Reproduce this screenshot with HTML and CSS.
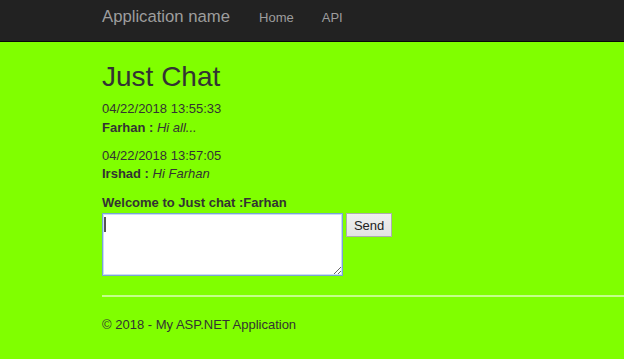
FILE: index.html
```html
<!DOCTYPE html>
<html lang="en">
<head>
    <meta charset="UTF-8">
    <meta name="viewport" content="width=device-width, initial-scale=1.0">
    <title>Just Chat - My ASP.NET Application</title>
    <link rel="stylesheet" href="styles.css">
</head>
<body>
    <!-- Top navigation -->
    <div class="navbar">
        <a class="navbar-brand" href="#">Application name</a>
        <ul class="nav">
            <li><a href="#">Home</a></li>
            <li><a href="#">API</a></li>
        </ul>
    </div>

    <div class="body-content">
        <h2>Just Chat</h2>

        <div class="messages">
            <p>
                04/22/2018 13:55:33<br>
                <strong>Farhan :</strong> <em>Hi all...</em>
            </p>
            <p>
                04/22/2018 13:57:05<br>
                <strong>Irshad :</strong> <em>Hi Farhan</em>
            </p>
        </div>

        <label class="welcome" for="message">Welcome to Just chat :Farhan</label>
        <div class="chat-form">
            <div class="input-wrap">
                <textarea id="message" class="chat-input"></textarea>
                <span class="caret"></span>
            </div>
            <button class="send-btn" type="button">Send</button>
        </div>

        <hr>
        <footer>
            <p>&copy; 2018 - My ASP.NET Application</p>
        </footer>
    </div>
</body>
</html>
```

FILE: styles.css
```css
body {
    margin: 0;
    padding: 0;
    font-family: "Liberation Sans", Arial, Helvetica, sans-serif;
    font-size: 13px;
    line-height: 18.6px;
    color: #333333;
    background-color: #80ff00;
    overflow: hidden;
}

/* Navbar */
.navbar {
    display: flex;
    align-items: baseline;
    height: 33px;
    padding: 8px 0 0 102px;
    background-color: #222222;
    border-bottom: 1px solid #080808;
}

.navbar-brand {
    font-size: 16.7px;
    line-height: 18.6px;
    color: #9d9d9d;
    text-decoration: none;
    margin-right: 29px;
}

.nav {
    display: flex;
    gap: 28px;
    list-style: none;
    margin: 0;
    padding: 0;
}

.nav a {
    color: #9d9d9d;
    text-decoration: none;
}

/* Page content */
.body-content {
    padding-left: 102px;
}

h2 {
    font-size: 28px;
    font-weight: 500;
    line-height: 1.1;
    margin: 19.6px 0 8px;
}

.messages p {
    margin: 0 0 9.3px;
}

.welcome {
    display: block;
    font-weight: bold;
    margin-top: 10.4px;
}

.chat-form {
    display: flex;
    align-items: flex-start;
    gap: 3.4px;
}

.input-wrap {
    position: relative;
}

.chat-input {
    display: block;
    box-sizing: border-box;
    width: 241px;
    height: 63.4px;
    margin: 0;
    padding: 2px;
    border: 1px solid #7aa3d6;
    box-shadow: inset 0 0 0 1px #c9dcf3;
    background: #ffffff;
    font-family: inherit;
    font-size: 13px;
    outline: none;
}

/* text cursor drawn over the empty box */
.caret {
    position: absolute;
    left: 2px;
    top: 4.4px;
    width: 2px;
    height: 15px;
    background-color: #555555;
}

.send-btn {
    box-sizing: border-box;
    width: 45.4px;
    height: 24px;
    padding: 0;
    border: 1px solid #adadad;
    background: linear-gradient(#f0f0f0, #e3e3e3);
    color: #222222;
    font-family: inherit;
    font-size: 13px;
}

hr {
    margin: 18.6px 0;
    border: 0;
    border-top: 2px solid #c4ff8a;
}

footer p {
    margin: 0;
}
```
